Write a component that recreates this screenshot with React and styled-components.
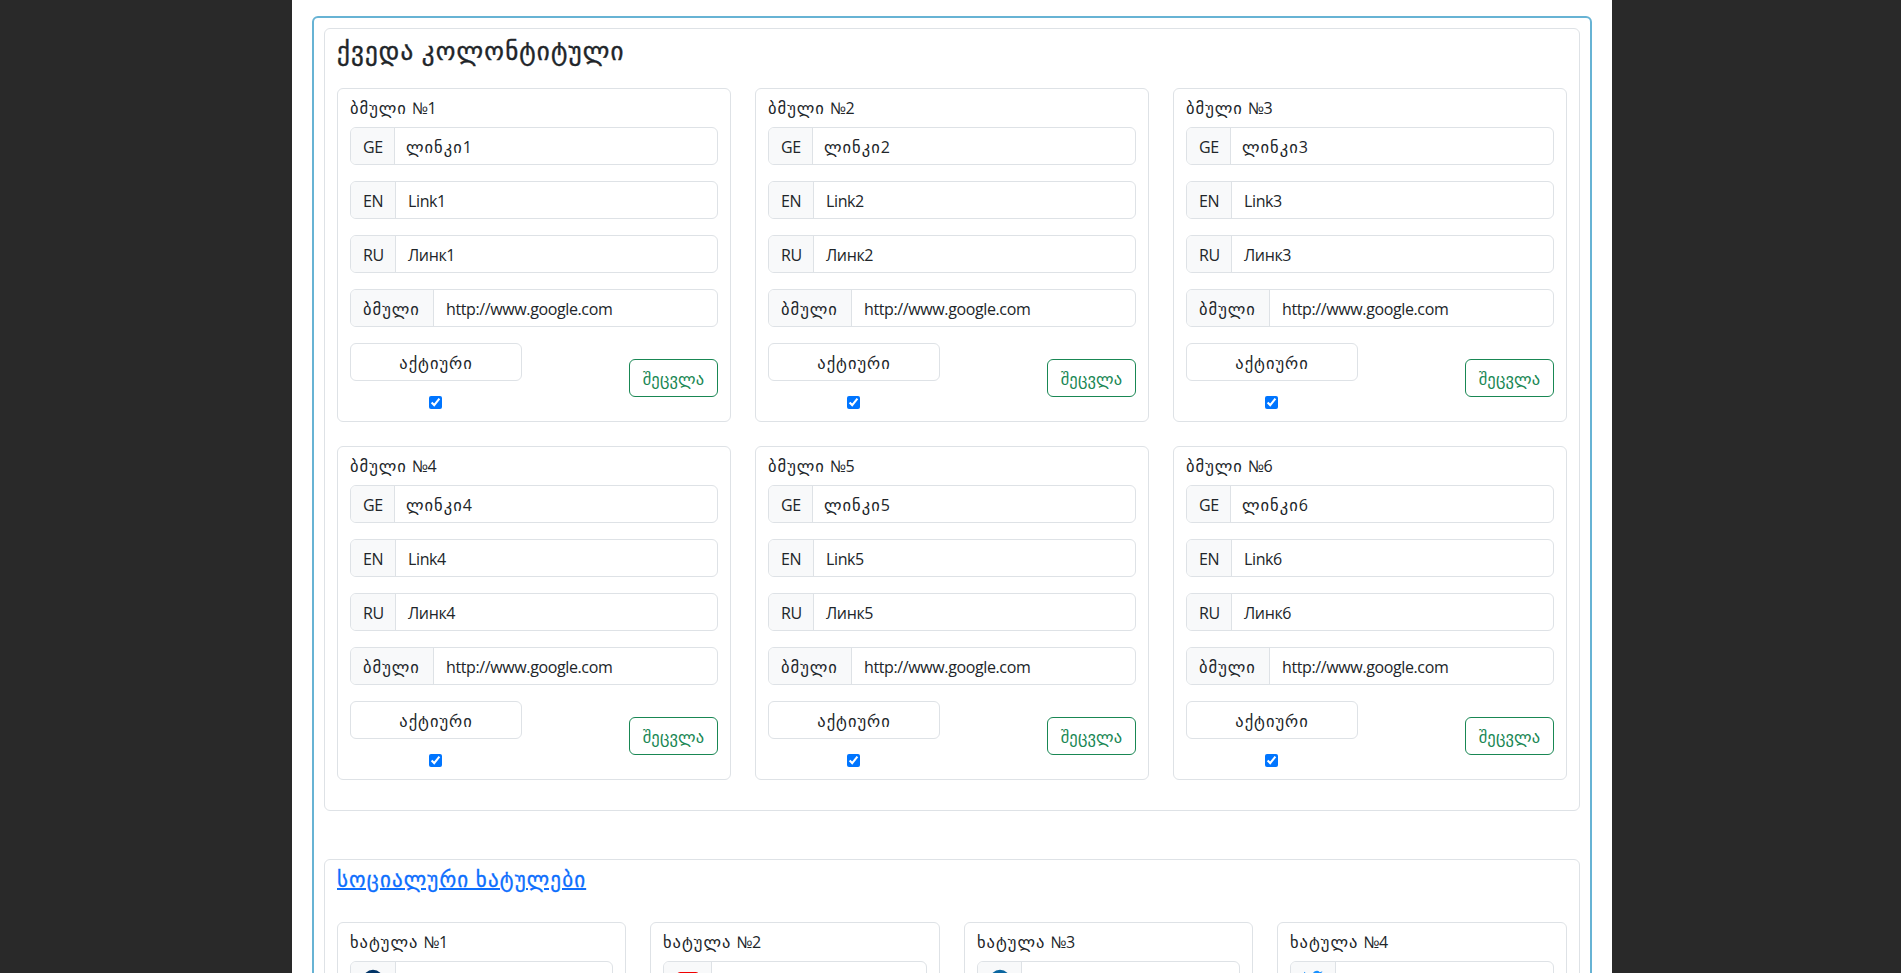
import React from "react";
import styled, { createGlobalStyle } from "styled-components";

const Global = createGlobalStyle`
  *, *::before, *::after { box-sizing: border-box; }
  html, body { margin: 0; height: 973px; overflow: hidden; background: #292929; }
  body {
    font: 400 16px/24px "Open Sans", "DejaVu Sans", sans-serif;
    letter-spacing: -0.38px;
    color: #212529;
  }
`;
const Container = styled.main`
  width: 1320px; height: 973px; margin: 0 auto 0 292px; padding: 16px 20px 0;
  background: #fff; overflow: hidden;
`;
const Outer = styled.div`
  height: 1400px; padding: 10px; border: 2px solid #67b3d4; border-radius: 6px;
  display: flex; flex-direction: column; gap: 48px;
`;
const Section = styled.section`
  border: 1px solid #dee2e6; border-radius: 6px; padding: 0 12px;
  height: ${(p) => p.$h}px;
`;
const Title = styled.h3`
  margin: 0; padding-top: 7px; height: 59px; font-size: 25px; line-height: 29px; font-weight: 500;
  letter-spacing: 1.15px; -webkit-text-stroke: 0.4px currentColor;
`;
const SubTitle = styled.h4`
  margin: 0; padding-top: 7px; height: 62px; font-size: 21px; line-height: 24px; font-weight: 500;
  letter-spacing: 1.15px; -webkit-text-stroke: 0.3px currentColor;
  a { color: #0d6efd; text-decoration: underline; text-decoration-thickness: 2px; }
`;
const Grid = styled.div`
  display: grid; grid-template-columns: ${(p) => p.$cols}; gap: 24px;
`;
const Card = styled.article`
  height: 334px; border: 1px solid #dee2e6; border-radius: 6px; padding: 6px 12px 8px;
`;
const Ka = styled.span`font-size: 16.5px; letter-spacing: 1px; line-height: 1;`;
const Label = styled.div`height: 24px; margin-bottom: 8px; line-height: 26px; white-space: pre; word-spacing: 1px;`;
const Group = styled.div`
  display: flex; height: 38px; margin-bottom: 16px; border: 1px solid #dee2e6;
  border-radius: 6px; overflow: hidden; line-height: 38px; white-space: nowrap;
`;
const Addon = styled.span`
  flex: none; width: ${(p) => p.$w}px; padding-left: 12px; background: #f8f9fa; border-right: 1px solid #dee2e6;
`;
const IconAddon = styled(Addon)`
  display: flex; justify-content: center; padding: 7px 0 0;
`;
const Value = styled.span`padding-left: ${(p) => p.$pad || 12}px;`;
const Actions = styled.div`
  display: flex; align-items: center; justify-content: space-between; height: 70px;
`;
const Active = styled.div`
  width: 172px; height: 70px; display: flex; flex-direction: column; align-items: center; gap: 15px;
`;
const ActiveLabel = styled.div`
  width: 100%; height: 38px; border: 1px solid #dee2e6; border-radius: 6px; line-height: 38px; text-align: center;
`;
const Check = styled.input`width: 13px; height: 13px; margin: 0 1px 0 0;`;
const Button = styled.button`
  width: 89px; height: 38px; padding: 1px 0 0; border: 1px solid #198754; border-radius: 6px;
  background: #fff; color: #198754; font: inherit; font-size: 16.5px; letter-spacing: 0.15px;
`;

const Facebook = () => (
  <svg width="20" height="22" viewBox="0 0 20 22">
    <circle cx="10" cy="11" r="10.2" fill="#003366" />
    <path d="M8.5 21v-7H6v-3h2.500V9c0-2.500 1.500-3.500 4.500-3v2.500c-2 0-2 .3-2 2.500h2l-.4 3H11v7z" fill="#fff" />
  </svg>
);
const Youtube = () => (
  <svg width="24" height="22" viewBox="0 0 24 22">
    <rect x="0" y="3" width="24" height="16" rx="4.500" fill="#f00000" />
    <path d="M9.500 7.500v7l6-3.500z" fill="#fff" />
  </svg>
);
const Linkedin = () => (
  <svg width="20" height="22" viewBox="0 0 20 22">
    <circle cx="10" cy="11" r="10.2" fill="#0a66a0" />
    <path d="M5 9h2v7H5zM5 6h2v2H5zM9 9h2v1c1-1.700 4.500-1.500 4.500 2v4h-2v-3.500c0-2-2.500-2-2.500 0V16H9z" fill="#fff" />
  </svg>
);
const Twitter = () => (
  <svg width="20" height="20" viewBox="0 0 24 24">
    <path
      fill="#1890ff"
      d="M23.950 4.570a10 10 0 0 1-2.820.770 4.960 4.960 0 0 0 2.160-2.720c-.950.550-2 .950-3.130 1.180a4.920 4.920 0 0 0-8.380 4.480C7.690 8.090 4.070 6.130 1.640 3.160a4.820 4.820 0 0 0-.670 2.480c0 1.710.870 3.210 2.190 4.100a4.900 4.900 0 0 1-2.230-.620v.060a4.920 4.920 0 0 0 3.950 4.830 5 5 0 0 1-2.210.080 4.940 4.940 0 0 0 4.600 3.420A9.870 9.870 0 0 1 0 19.540a14 14 0 0 0 7.550 2.210c9.050 0 14-7.500 14-13.980 0-.210 0-.420-.020-.630a9.940 9.940 0 0 0 2.420-2.570z"
    />
  </svg>
);

const social = [
  { w: 45, Icon: Facebook },
  { w: 48, Icon: Youtube },
  { w: 44, Icon: Linkedin },
  { w: 45, Icon: Twitter },
];

export default function App() {
  return (
    <>
      <Global />
      <Container>
        <Outer>
          <Section $h={783}>
            <Title>ქვედა კოლონტიტული</Title>
            <Grid $cols="repeat(3, 1fr)">
              {[1, 2, 3, 4, 5, 6].map((n) => (
                <Card key={n}>
                  <Label><Ka>ბმული</Ka> №{n}</Label>
                  <Group><Addon $w={44}>GE</Addon><Value $pad={11}><Ka>ლინკი</Ka>{n}</Value></Group>
                  <Group><Addon $w={45}>EN</Addon><Value>Link{n}</Value></Group>
                  <Group><Addon $w={45}>RU</Addon><Value>Линк{n}</Value></Group>
                  <Group><Addon $w={83}><Ka>ბმული</Ka></Addon><Value>http://www.google.com</Value></Group>
                  <Actions>
                    <Active>
                      <ActiveLabel><Ka>აქტიური</Ka></ActiveLabel>
                      <Check type="checkbox" defaultChecked />
                    </Active>
                    <Button>შეცვლა</Button>
                  </Actions>
                </Card>
              ))}
            </Grid>
          </Section>
          <Section $h={500}>
            <SubTitle><a href="#social">სოციალური ხატულები</a></SubTitle>
            <Grid $cols="289px 290px 289px 290px">
              {social.map(({ w, Icon }, i) => (
                <Card key={i}>
                  <Label><Ka>ხატულა</Ka> №{i + 1}</Label>
                  <Group><IconAddon $w={w}><Icon /></IconAddon></Group>
                </Card>
              ))}
            </Grid>
          </Section>
        </Outer>
      </Container>
    </>
  );
}
